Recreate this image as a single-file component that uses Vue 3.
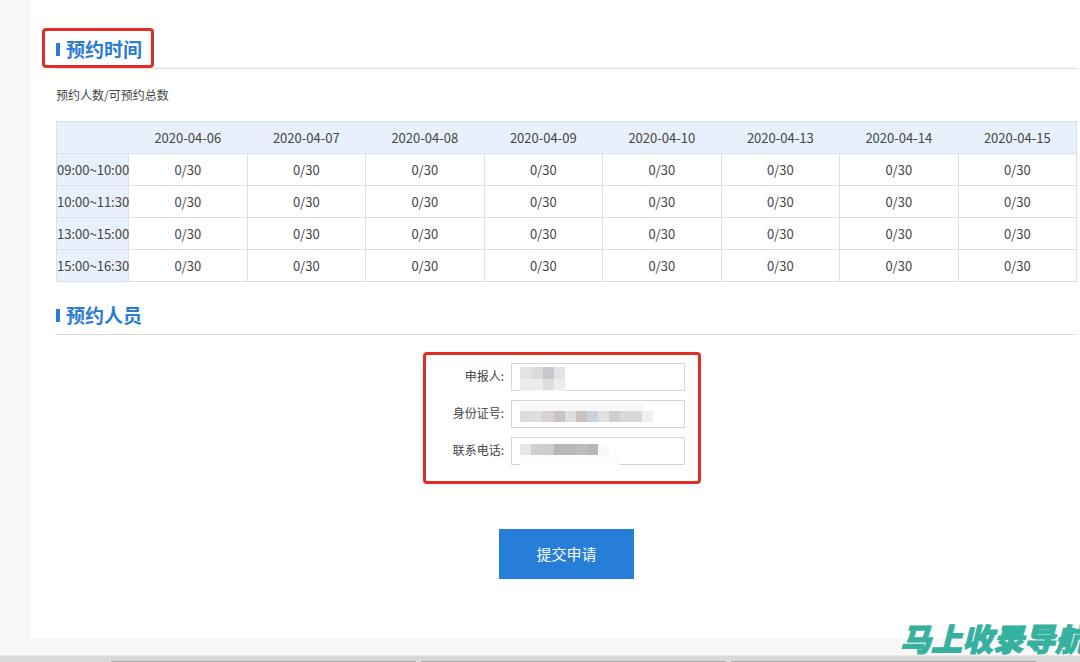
<script setup>
import { reactive } from 'vue'

const dates = [
  '2020-04-06', '2020-04-07', '2020-04-08', '2020-04-09',
  '2020-04-10', '2020-04-13', '2020-04-14', '2020-04-15',
]
const slots = ['09:00~10:00', '10:00~11:30', '13:00~15:00', '15:00~16:30']

// Each mask is a list of [x, y, width, height, fill] blocks hiding the private value.
const fields = [
  {
    id: 'applicant',
    label: '申报人:',
    mask: [
      [9, 4, 12, 12, '#e3e3e4'], [21, 4, 11, 12, '#dadada'], [32, 4, 11, 12, '#c6c8cb'], [43, 4, 11, 12, '#e2e3e4'],
      [9, 16, 23, 11, '#ebecec'], [32, 16, 11, 11, '#dcdddd'], [43, 16, 11, 11, '#ebedec'],
      [9, 27, 45, 1, '#f4f4f4'],
    ],
  },
  {
    id: 'idcard',
    label: '身份证号:',
    mask: [
      [9, 4, 124, 7, '#f7f7f7'],
      [9, 11, 12, 11, '#dcdcde'], [21, 11, 10, 11, '#dfdfe0'], [31, 11, 12, 11, '#d8d1d1'], [43, 11, 11, 11, '#c8c4c6'],
      [54, 11, 11, 11, '#dfdedf'], [65, 11, 11, 11, '#c9c2bf'], [76, 11, 11, 11, '#ccd2dc'], [87, 11, 11, 11, '#e1e1e1'],
      [98, 11, 11, 11, '#cecdcf'], [109, 11, 11, 11, '#d7d8da'], [120, 11, 11, 11, '#d9d7da'], [131, 11, 11, 11, '#f0f0f1'],
    ],
  },
  {
    id: 'phone',
    label: '联系电话:',
    mask: [
      [9, 7, 11, 11, '#e6e6e2'], [20, 7, 11, 11, '#cfcfcd'], [31, 7, 12, 11, '#cbcccb'], [43, 7, 22, 11, '#b7b7b6'],
      [65, 7, 11, 11, '#bdbdbc'], [76, 7, 11, 11, '#b6b8b8'], [87, 7, 11, 11, '#f8f8fc'],
      [9, 18, 99, 10, '#fcfcfc'],
    ],
  },
]
const form = reactive({ applicant: '', idcard: '', phone: '' })
</script>

<template>
  <div class="page">
    <main class="panel">
      <h2 class="title">
        <span class="bar"></span>预约时间
        <span class="callout title-callout"></span>
      </h2>
      <p class="hint">预约人数/可预约总数</p>
      <table class="schedule">
        <thead>
          <tr>
            <th class="slot"></th>
            <th v-for="d in dates" :key="d" scope="col">{{ d }}</th>
          </tr>
        </thead>
        <tbody>
          <tr v-for="s in slots" :key="s">
            <th class="slot" scope="row">{{ s }}</th>
            <td v-for="d in dates" :key="d">0/30</td>
          </tr>
        </tbody>
      </table>

      <h2 class="title people"><span class="bar"></span>预约人员</h2>
      <form class="form" @submit.prevent>
        <div class="fields">
          <div v-for="f in fields" :key="f.id" class="row">
            <label :for="f.id">{{ f.label }}</label>
            <div class="control">
              <input :id="f.id" v-model="form[f.id]" type="text" />
              <svg class="mask" viewBox="0 0 174 28" shape-rendering="crispEdges" aria-hidden="true">
                <rect v-for="(b, i) in f.mask" :key="i" :x="b[0]" :y="b[1]" :width="b[2]" :height="b[3]" :fill="b[4]" />
              </svg>
            </div>
          </div>
          <span class="callout fields-callout"></span>
        </div>
        <button type="submit" class="submit">提交申请</button>
      </form>
    </main>
    <footer class="taskbar">
      <span class="lead"></span><span class="item"></span><span class="item"></span><span class="item"></span>
    </footer>
    <div class="watermark">马上收录导航</div>
  </div>
</template>

<style>
body {
  margin: 0;
}
</style>

<style scoped>
.page {
  position: relative;
  display: flex;
  flex-direction: column;
  min-height: 100vh;
  box-sizing: border-box;
  overflow: hidden;
  background: #f7f7f7;
  color: #444;
  font-family: "Noto Sans CJK SC", sans-serif;
  font-size: 12px;
}
.panel {
  margin-left: 30px;
  padding: 32px 3px 59px 26px;
  background: #fff;
}
.title {
  position: relative;
  display: flex;
  align-items: center;
  height: 34px;
  margin: 0;
  padding-bottom: 2px;
  border-bottom: 1px solid #dcdcdc;
  color: #2b7cd3;
  font-size: 19px;
  line-height: 34px;
  font-weight: 700;
}
.bar {
  width: 4px;
  height: 13px;
  margin-right: 6px;
  background: #2b7cd3;
}
.callout {
  position: absolute;
  box-sizing: border-box;
  border: 3px solid #e02e24;
  border-radius: 4px;
  pointer-events: none;
}
.title-callout {
  top: -4px;
  left: -14px;
  width: 112px;
  height: 40px;
}
.hint {
  margin: 16px 0;
  line-height: 20px;
}
.schedule {
  width: 100%;
  table-layout: fixed;
  border-collapse: collapse;
  font-size: 13px;
  line-height: 20px;
}
.schedule th,
.schedule td {
  height: 31px;
  padding: 0;
  border: 1px solid #dcdfe4;
  font-weight: 400;
  text-align: center;
  white-space: nowrap;
}
.schedule th {
  background: #e8f1fb;
}
.schedule thead th {
  border-left-color: transparent;
  border-right-color: transparent;
}
.schedule thead th:first-child {
  border-left-color: #dcdfe4;
}
.schedule thead th:last-child {
  border-right-color: #dcdfe4;
}
.schedule .slot {
  width: 71px;
}
.people {
  margin-top: 16px;
}
.form {
  display: flex;
  flex-direction: column;
  align-items: center;
  gap: 64px;
  padding-top: 28px;
}
.fields {
  position: relative;
  display: flex;
  flex-direction: column;
  gap: 9px;
}
.fields-callout {
  inset: -11px -16px -19px -25px;
}
.row {
  display: grid;
  grid-template-columns: 56px 174px;
  column-gap: 7px;
}
.row label {
  line-height: 26px;
  text-align: right;
  white-space: nowrap;
}
.control {
  position: relative;
  height: 28px;
}
.control input {
  width: 100%;
  height: 100%;
  box-sizing: border-box;
  padding: 0 8px;
  border: 1px solid #d5d5da;
  background: #fff;
  color: inherit;
  font: inherit;
}
.mask {
  position: absolute;
  inset: 0;
  width: 100%;
  height: 100%;
  pointer-events: none;
}
.submit {
  width: 135px;
  height: 50px;
  padding: 0 0 2px;
  border: 0;
  background: #267ed9;
  color: #fff;
  font-family: inherit;
  font-size: 15px;
  cursor: pointer;
}
.taskbar {
  display: flex;
  gap: 5px;
  height: 6px;
  margin-top: auto;
  border-top: 1px solid #e8e8e8;
  background: #d9d9d9;
}
.lead {
  width: 106px;
}
.item {
  width: 305px;
  border-bottom: 1px solid #a8a8a8;
}
.watermark {
  position: absolute;
  right: -6px;
  bottom: 4px;
  color: #36b1a0;
  font-size: 31px;
  line-height: 40px;
  font-weight: 900;
  font-style: italic;
  white-space: nowrap;
  -webkit-text-stroke: 1px #36b1a0;
}
</style>
